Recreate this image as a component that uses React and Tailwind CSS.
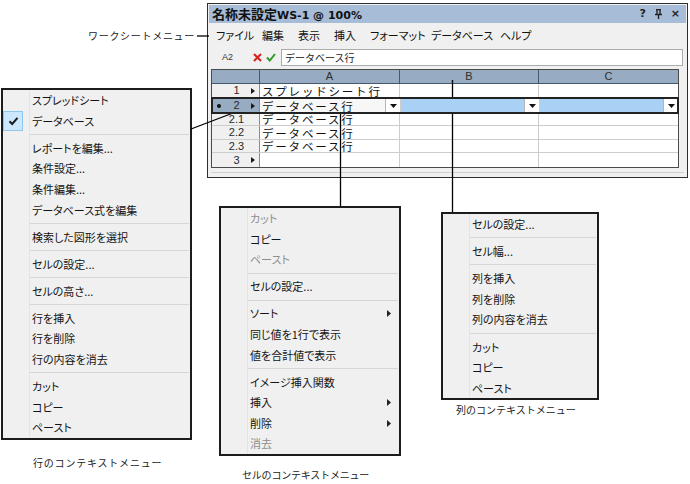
import React from 'react';

const leftItems = [
  { t: 'スプレッドシート' },
  { t: 'データベース', check: true },
  'sep',
  { t: 'レポートを編集...' },
  { t: '条件設定...' },
  { t: '条件編集...' },
  { t: 'データベース式を編集' },
  'sep',
  { t: '検索した図形を選択' },
  'sep',
  { t: 'セルの設定...' },
  'sep',
  { t: 'セルの高さ...' },
  'sep',
  { t: '行を挿入' },
  { t: '行を削除' },
  { t: '行の内容を消去' },
  'sep',
  { t: 'カット' },
  { t: 'コピー' },
  { t: 'ペースト' },
];

const cellItems = [
  { t: 'カット', off: true },
  { t: 'コピー' },
  { t: 'ペースト', off: true },
  'sep',
  { t: 'セルの設定...' },
  'sep',
  { t: 'ソート', sub: true },
  { t: '同じ値を1行で表示' },
  { t: '値を合計値で表示' },
  'sep',
  { t: 'イメージ挿入関数' },
  { t: '挿入', sub: true },
  { t: '削除', sub: true },
  { t: '消去', off: true },
];

const colItems = [
  { t: 'セルの設定...' },
  'sep',
  { t: 'セル幅...' },
  'sep',
  { t: '列を挿入' },
  { t: '列を削除' },
  { t: '列の内容を消去' },
  'sep',
  { t: 'カット' },
  { t: 'コピー' },
  { t: 'ペースト' },
];

function SubArrow() {
  return (
    <svg width="4" height="7" viewBox="0 0 4 7">
      <path d="M0 0 L4 3.5 L0 7 Z" fill="#222" />
    </svg>
  );
}

function CheckBox() {
  return (
    <div className="flex h-[20px] w-[20px] items-center justify-center border border-[#8fc6ee] bg-[#cce8ff]">
      <svg width="11" height="10" viewBox="0 0 11 10">
        <path d="M1.5 5.2 L4.2 8 L9.5 1.8" fill="none" stroke="#1b1b1b" strokeWidth="2" />
      </svg>
    </div>
  );
}

function ContextMenu({ items, className }) {
  return (
    <div
      className={`absolute border-2 border-[#1c1c1c] bg-[#f0f0f0] text-[11px] text-[#141414] [font-feature-settings:'palt'] ${className}`}
    >
      {items.map((it, i) =>
        it === 'sep' ? (
          <div key={i} className="flex h-[6.5px]">
            <div className="w-[27px] shrink-0 border-r border-[#e3e3e3]" />
            <div className="flex flex-1 items-center pr-[1px]">
              <div className="h-px w-full bg-[#d6d6d6]" />
            </div>
          </div>
        ) : (
          <div key={i} className="flex h-[20.6px]">
            <div className="flex w-[27px] shrink-0 items-center border-r border-[#e3e3e3]">
              {it.check && <CheckBox />}
            </div>
            <div
              className={`flex flex-1 items-center justify-between pl-[2px] pr-[8px] ${
                it.off ? 'text-[#8e8e8e]' : ''
              }`}
            >
              <span>{it.t}</span>
              {it.sub && <SubArrow />}
            </div>
          </div>
        )
      )}
    </div>
  );
}

function Tri() {
  return (
    <svg width="4" height="6" viewBox="0 0 4 6">
      <path d="M0 0 L4 3 L0 6 Z" fill="#1a1a1a" />
    </svg>
  );
}

function DropBtn() {
  return (
    <div className="flex h-full w-[15px] shrink-0 items-center justify-center border-l border-[#b5b5b5] bg-white">
      <svg width="7" height="4" viewBox="0 0 7 4">
        <path d="M0 0 L7 0 L3.5 4 Z" fill="#111" />
      </svg>
    </div>
  );
}

function RowHead({ num, tri, dot, sel }) {
  return (
    <div
      className={`flex w-[48px] shrink-0 items-center border-r border-[#8c8c8c] text-[11px] text-[#2a2a2a] ${
        sel ? 'bg-[#97abc2]' : 'bg-[#f0f0f0]'
      }`}
    >
      <div className="flex w-[14px] justify-center">
        {dot && <div className="h-[4px] w-[4px] rounded-full bg-[#111]" />}
      </div>
      <div className="w-[22px] text-center font-['Liberation_Sans',sans-serif] leading-none">{num}</div>
      <div className="flex w-[12px] justify-center">{tri && <Tri />}</div>
    </div>
  );
}

function DataRow({ num, tri, text, h }) {
  return (
    <div className={`flex border-b border-[#cdcdcd] ${h}`}>
      <RowHead num={num} tri={tri} />
      <div className="flex w-[140px] items-center whitespace-nowrap border-r border-[#cdcdcd] bg-white pl-[2px] text-[11.5px] leading-[12px] tracking-[1.8px] text-[#111]">
        {text}
      </div>
      <div className="w-[139px] border-r border-[#cdcdcd] bg-white" />
      <div className="flex-1 bg-white" />
    </div>
  );
}

function Worksheet() {
  return (
    <div className="absolute left-[207px] top-[3px] flex h-[175px] w-[481px] flex-col border border-[#2e2e2e] bg-[#f0f0f0] p-px">
      <div className="flex h-[18px] shrink-0 items-center bg-[#a7bcd6] pl-[3px] pr-[6px]">
        <span className="text-[13px] font-bold leading-none text-[#111]">
          名称未設定<span className="font-['DejaVu_Sans',sans-serif] text-[11px]">WS-1 @ 100%</span>
        </span>
        <div className="ml-auto flex items-center gap-[9px] font-['DejaVu_Sans',sans-serif] text-[11px] font-bold text-[#222]">
          <span>?</span>
          <svg width="7" height="10" viewBox="0 0 7 10">
            <path d="M1 0.5 H6 M2 0.5 V5.5 M5 0.5 V5.5 M0 5.5 H7 M3.5 5.5 V10" stroke="#222" strokeWidth="1.4" fill="none" />
          </svg>
          <span>×</span>
        </div>
      </div>

      <div className="flex h-[24px] shrink-0 items-center whitespace-nowrap pl-[7px] text-[11px] text-[#111] [font-feature-settings:'palt']">
        <span className="w-[46px] shrink-0">ファイル</span>
        <span className="w-[36px] shrink-0">編集</span>
        <span className="w-[36px] shrink-0">表示</span>
        <span className="w-[36px] shrink-0">挿入</span>
        <span className="w-[61px] shrink-0">フォーマット</span>
        <span className="w-[69px] shrink-0">データベース</span>
        <span>ヘルプ</span>
      </div>

      <div className="flex h-[21px] shrink-0 items-center">
        <span className="w-[38px] pl-[13px] font-['Liberation_Sans',sans-serif] text-[9px] text-[#333]">A2</span>
        <svg className="ml-[6px]" width="9" height="9" viewBox="0 0 9 9">
          <path d="M1 1 L8 8 M8 1 L1 8" stroke="#d4241c" strokeWidth="2" />
        </svg>
        <svg className="ml-[4px]" width="10" height="9" viewBox="0 0 10 9">
          <path d="M1 4.5 L3.8 7.5 L9 1" stroke="#2f9a2a" strokeWidth="2" fill="none" />
        </svg>
        <div className="ml-[5px] mr-[3px] flex h-[17px] flex-1 items-center border border-[#acacac] bg-white pl-[3px] text-[10px] text-[#222]">
          データベース行
        </div>
      </div>

      <div className="ml-[2px] mt-[1px] w-[468px] shrink-0 border border-[#4a4a4a] bg-white">
        <div className="flex h-[14px] border-b border-[#46586c] bg-[#97abc2] font-['Liberation_Sans',sans-serif] text-[11px] leading-none text-[#2d2d2d]">
          <div className="w-[48px] border-r border-[#46586c]" />
          <div className="flex w-[140px] items-center justify-center border-r border-[#46586c]">A</div>
          <div className="flex w-[139px] items-center justify-center border-r border-[#46586c]">B</div>
          <div className="flex flex-1 items-center justify-center">C</div>
        </div>

        <DataRow num="1" tri text="スプレッドシート行" h="h-[14px]" />

        <div className="relative z-10 flex h-[15px] outline-2 -outline-offset-1 outline-[#222]">
          <RowHead num="2" tri dot sel />
          <div className="flex w-[140px] items-center bg-[#f7f7f7] pl-[2px] text-[11.5px] leading-[12px] tracking-[1.8px] text-[#111]">
            <span className="flex-1 whitespace-nowrap">データベース行</span>
            <DropBtn />
          </div>
          <div className="flex w-[139px] items-center border-l border-[#cdcdcd] bg-[#a9d0f5]">
            <span className="flex-1" />
            <DropBtn />
          </div>
          <div className="flex flex-1 items-center border-l border-[#cdcdcd] bg-[#a9d0f5]">
            <span className="flex-1" />
            <DropBtn />
          </div>
        </div>

        <DataRow num="2.1" text="データベース行" h="h-[13px]" />
        <DataRow num="2.2" text="データベース行" h="h-[14px]" />
        <DataRow num="2.3" text="データベース行" h="h-[13px]" />
        <DataRow num="3" tri text="" h="h-[14px] border-b-0" />
      </div>

      <div className="mx-[2px] mt-[4px] h-px bg-[#cfcfcf]" />
    </div>
  );
}

export default function App() {
  return (
    <div className="relative h-[484px] w-[690px] overflow-hidden bg-white font-['Noto_Sans_CJK_JP',sans-serif]">
      <Worksheet />

      <span className="absolute left-[88px] top-[28px] text-[10px] tracking-[0.7px] text-[#222]">
        ワークシートメニュー
      </span>

      <ContextMenu items={leftItems} className="left-[1px] top-[88px] w-[191px]" />
      <ContextMenu items={cellItems} className="left-[219px] top-[206px] w-[182px]" />
      <ContextMenu items={colItems} className="left-[441px] top-[212px] w-[158px]" />

      <span className="absolute left-[33px] top-[455px] text-[10px] tracking-[0.8px] text-[#222]">
        行のコンテキストメニュー
      </span>
      <span className="absolute left-[242px] top-[467px] text-[10px] tracking-[-0.2px] text-[#222]">
        セルのコンテキストメニュー
      </span>
      <span className="absolute left-[456px] top-[402px] text-[10px] text-[#222]">
        列のコンテキストメニュー
      </span>

      <svg className="pointer-events-none absolute left-0 top-0" width="690" height="484">
        <g stroke="#000" strokeWidth="1.3">
          <line x1="197" y1="36" x2="209" y2="36" />
          <line x1="191" y1="129" x2="233" y2="113" />
          <line x1="340.5" y1="111" x2="340.5" y2="206" />
          <line x1="452.5" y1="80" x2="452.5" y2="212" />
        </g>
      </svg>
    </div>
  );
}
